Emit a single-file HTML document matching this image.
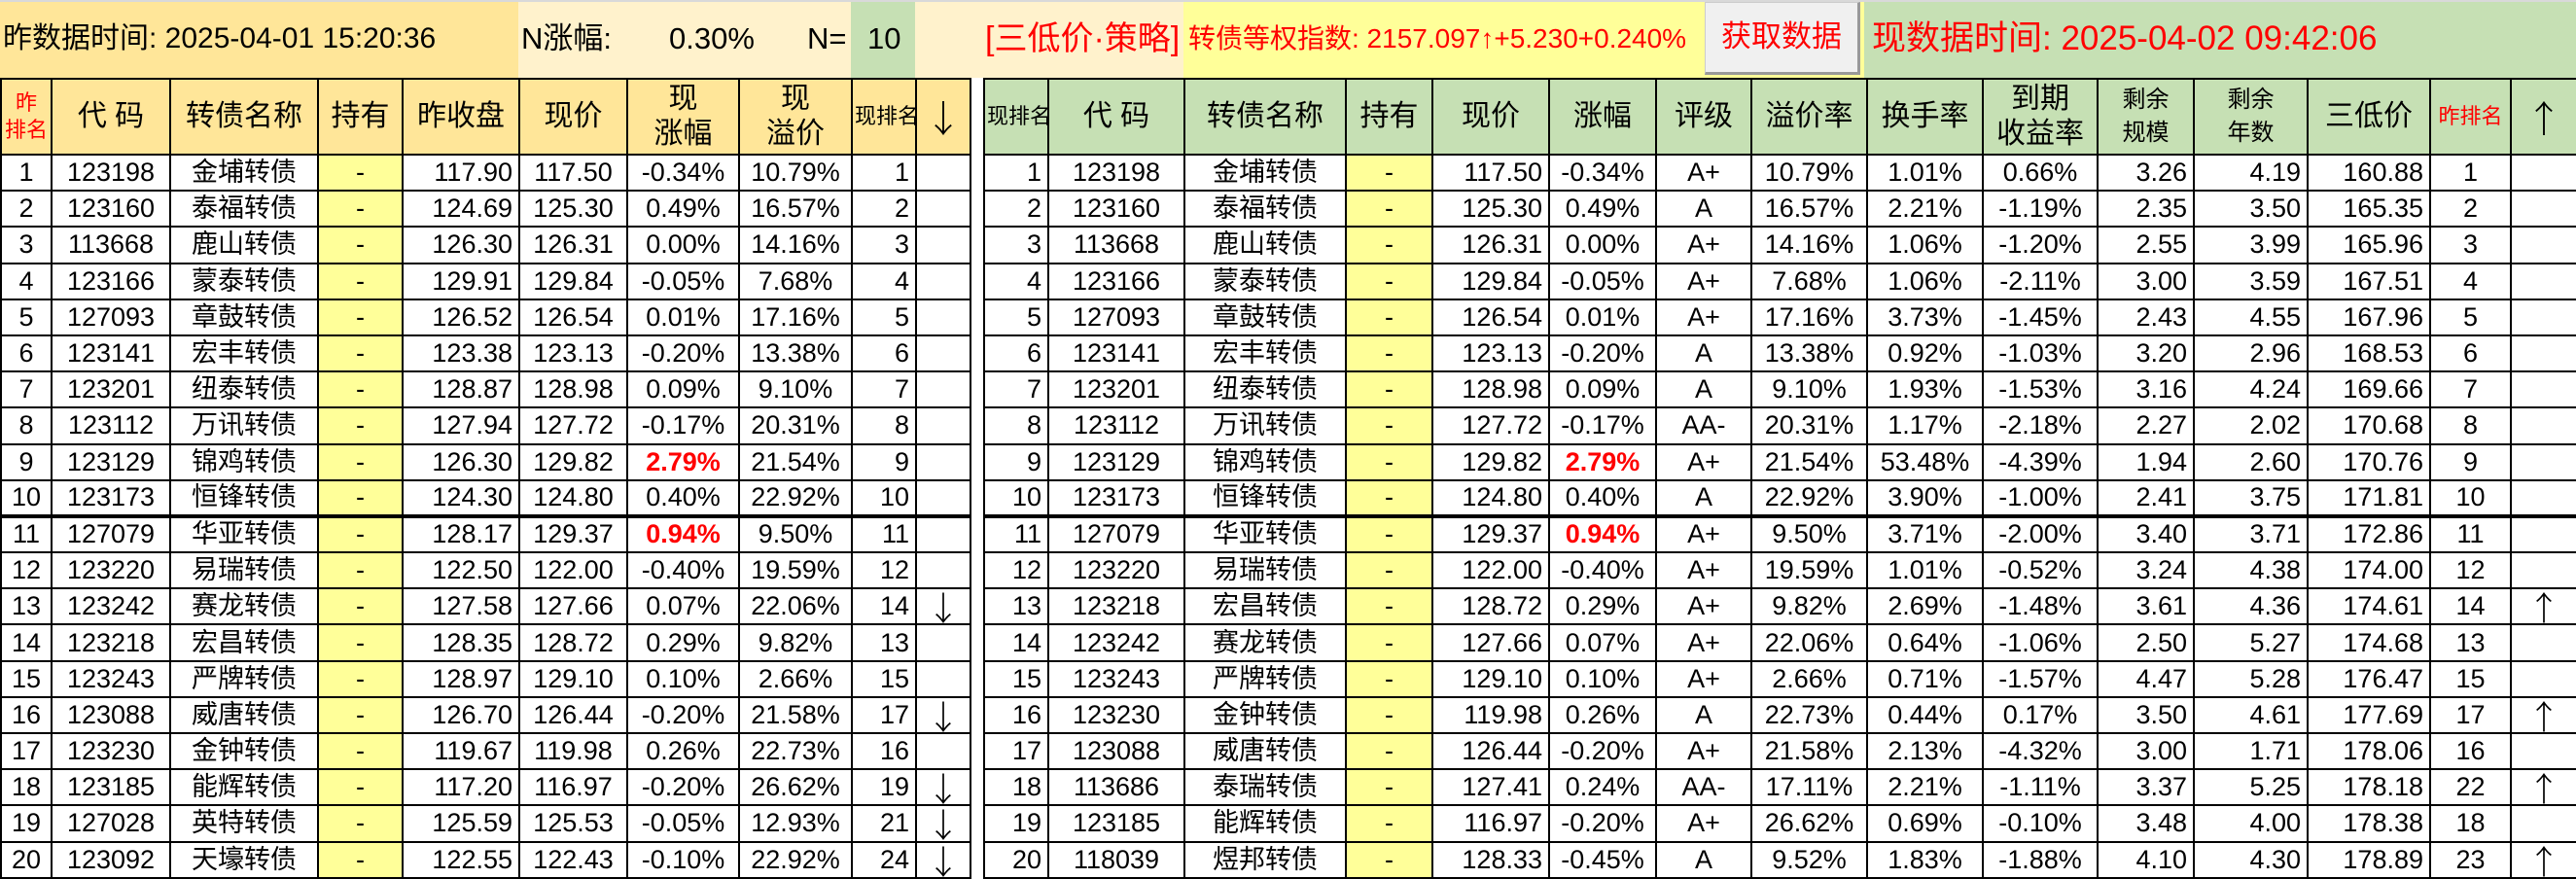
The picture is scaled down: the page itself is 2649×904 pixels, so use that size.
<!DOCTYPE html>
<html><head><meta charset="utf-8"><style>
*{margin:0;padding:0;box-sizing:border-box}
body{width:2649px;height:902px;overflow:hidden;background:#fff;font-family:"Liberation Sans Narrow","Liberation Sans","Noto Sans CJK SC",sans-serif;color:#000;position:relative}
.bar{position:absolute;top:0;height:80px;border-top:2px solid #d9d9d9}
.t{position:absolute;white-space:nowrap;font-size:31px;line-height:80px;top:0}
table{position:absolute;top:80px;border-collapse:collapse;table-layout:fixed;font-size:27px}
td{border:2px solid #000;height:37.2px;padding:0 6px;white-space:nowrap;overflow:hidden;line-height:33px}
tr.h td{height:78px;font-size:30px;text-align:center;line-height:36px;padding:0 2px}
.L tr.h td{background:#FFE699}
.R tr.h td{background:#C6E0B4}
.c{text-align:center}.r{text-align:right}
.y{background:#FFFF99;text-align:center}
.red{color:#f00}.b{color:#f00;font-weight:bold}
.sm{font-size:22px!important;line-height:28px!important}
.ar{text-align:center;font-size:34px;line-height:33px;font-family:"Noto Sans CJK SC","Liberation Sans",sans-serif;font-weight:300}
tr.h td.ar{font-size:38px}
tr.k td{border-bottom:4px solid #000}
</style></head><body>
<div class="bar" style="left:0;width:533px;background:#FFE699"></div>
<div class="bar" style="left:533px;width:342px;background:#FFF2CC"></div>
<div class="bar" style="left:875px;width:66px;background:#C6E0B4"></div>
<div class="bar" style="left:941px;width:276px;background:#FFF2CC"></div>
<div class="bar" style="left:1217px;width:700px;background:#FFFF99"></div>
<div class="bar" style="left:1917px;width:732px;background:#C6E0B4"></div>
<div class="t" style="left:3px;font-size:30px">昨数据时间: 2025-04-01 15:20:36</div>
<div class="t" style="left:536px">N涨幅:</div>
<div class="t" style="left:688px">0.30%</div>
<div class="t" style="left:830px">N=</div>
<div class="t" style="left:892px">10</div>
<div class="t red" style="left:1013px;font-size:34px">[三低价·策略]</div>
<div class="t red" style="left:1222px;font-size:28px">转债等权指数:&nbsp;2157.097↑+5.230+0.240%</div>
<div style="position:absolute;left:1753px;top:2px;width:160px;height:75px;background:#F0F0F0;border:1px solid #ccc;border-right:3px solid #999;border-bottom:3px solid #999;color:#f00;font-size:31px;line-height:70px;text-align:center">获取数据</div>
<div class="t red" style="left:1925px;font-size:35px">现数据时间: 2025-04-02 09:42:06</div>

<table class="L" style="left:0;width:997px">
<colgroup><col style="width:52px"><col style="width:122px"><col style="width:152px"><col style="width:87px"><col style="width:120px"><col style="width:111px"><col style="width:115px"><col style="width:116px"><col style="width:66px"><col style="width:56px"></colgroup>
<tr class="h"><td class="red sm">昨<br>排名</td><td>代 码</td><td>转债名称</td><td>持有</td><td>昨收盘</td><td>现价</td><td>现<br>涨幅</td><td>现<br>溢价</td><td class="sm">现排名</td><td class="ar">↓</td></tr>
<tr><td class="c">1</td><td class="c">123198</td><td class="c">金埔转债</td><td class="y">-</td><td class="r">117.90</td><td class="c">117.50</td><td class="c">-0.34%</td><td class="c">10.79%</td><td class="r">1</td><td></td></tr>
<tr><td class="c">2</td><td class="c">123160</td><td class="c">泰福转债</td><td class="y">-</td><td class="r">124.69</td><td class="c">125.30</td><td class="c">0.49%</td><td class="c">16.57%</td><td class="r">2</td><td></td></tr>
<tr><td class="c">3</td><td class="c">113668</td><td class="c">鹿山转债</td><td class="y">-</td><td class="r">126.30</td><td class="c">126.31</td><td class="c">0.00%</td><td class="c">14.16%</td><td class="r">3</td><td></td></tr>
<tr><td class="c">4</td><td class="c">123166</td><td class="c">蒙泰转债</td><td class="y">-</td><td class="r">129.91</td><td class="c">129.84</td><td class="c">-0.05%</td><td class="c">7.68%</td><td class="r">4</td><td></td></tr>
<tr><td class="c">5</td><td class="c">127093</td><td class="c">章鼓转债</td><td class="y">-</td><td class="r">126.52</td><td class="c">126.54</td><td class="c">0.01%</td><td class="c">17.16%</td><td class="r">5</td><td></td></tr>
<tr><td class="c">6</td><td class="c">123141</td><td class="c">宏丰转债</td><td class="y">-</td><td class="r">123.38</td><td class="c">123.13</td><td class="c">-0.20%</td><td class="c">13.38%</td><td class="r">6</td><td></td></tr>
<tr><td class="c">7</td><td class="c">123201</td><td class="c">纽泰转债</td><td class="y">-</td><td class="r">128.87</td><td class="c">128.98</td><td class="c">0.09%</td><td class="c">9.10%</td><td class="r">7</td><td></td></tr>
<tr><td class="c">8</td><td class="c">123112</td><td class="c">万讯转债</td><td class="y">-</td><td class="r">127.94</td><td class="c">127.72</td><td class="c">-0.17%</td><td class="c">20.31%</td><td class="r">8</td><td></td></tr>
<tr><td class="c">9</td><td class="c">123129</td><td class="c">锦鸡转债</td><td class="y">-</td><td class="r">126.30</td><td class="c">129.82</td><td class="c b">2.79%</td><td class="c">21.54%</td><td class="r">9</td><td></td></tr>
<tr class="k"><td class="c">10</td><td class="c">123173</td><td class="c">恒锋转债</td><td class="y">-</td><td class="r">124.30</td><td class="c">124.80</td><td class="c">0.40%</td><td class="c">22.92%</td><td class="r">10</td><td></td></tr>
<tr><td class="c">11</td><td class="c">127079</td><td class="c">华亚转债</td><td class="y">-</td><td class="r">128.17</td><td class="c">129.37</td><td class="c b">0.94%</td><td class="c">9.50%</td><td class="r">11</td><td></td></tr>
<tr><td class="c">12</td><td class="c">123220</td><td class="c">易瑞转债</td><td class="y">-</td><td class="r">122.50</td><td class="c">122.00</td><td class="c">-0.40%</td><td class="c">19.59%</td><td class="r">12</td><td></td></tr>
<tr><td class="c">13</td><td class="c">123242</td><td class="c">赛龙转债</td><td class="y">-</td><td class="r">127.58</td><td class="c">127.66</td><td class="c">0.07%</td><td class="c">22.06%</td><td class="r">14</td><td class="ar">↓</td></tr>
<tr><td class="c">14</td><td class="c">123218</td><td class="c">宏昌转债</td><td class="y">-</td><td class="r">128.35</td><td class="c">128.72</td><td class="c">0.29%</td><td class="c">9.82%</td><td class="r">13</td><td></td></tr>
<tr><td class="c">15</td><td class="c">123243</td><td class="c">严牌转债</td><td class="y">-</td><td class="r">128.97</td><td class="c">129.10</td><td class="c">0.10%</td><td class="c">2.66%</td><td class="r">15</td><td></td></tr>
<tr><td class="c">16</td><td class="c">123088</td><td class="c">威唐转债</td><td class="y">-</td><td class="r">126.70</td><td class="c">126.44</td><td class="c">-0.20%</td><td class="c">21.58%</td><td class="r">17</td><td class="ar">↓</td></tr>
<tr><td class="c">17</td><td class="c">123230</td><td class="c">金钟转债</td><td class="y">-</td><td class="r">119.67</td><td class="c">119.98</td><td class="c">0.26%</td><td class="c">22.73%</td><td class="r">16</td><td></td></tr>
<tr><td class="c">18</td><td class="c">123185</td><td class="c">能辉转债</td><td class="y">-</td><td class="r">117.20</td><td class="c">116.97</td><td class="c">-0.20%</td><td class="c">26.62%</td><td class="r">19</td><td class="ar">↓</td></tr>
<tr><td class="c">19</td><td class="c">127028</td><td class="c">英特转债</td><td class="y">-</td><td class="r">125.59</td><td class="c">125.53</td><td class="c">-0.05%</td><td class="c">12.93%</td><td class="r">21</td><td class="ar">↓</td></tr>
<tr><td class="c">20</td><td class="c">123092</td><td class="c">天壕转债</td><td class="y">-</td><td class="r">122.55</td><td class="c">122.43</td><td class="c">-0.10%</td><td class="c">22.92%</td><td class="r">24</td><td class="ar">↓</td></tr>
</table>

<table class="R" style="left:1011px;width:1638px">
<colgroup><col style="width:66px"><col style="width:140px"><col style="width:166px"><col style="width:89px"><col style="width:120px"><col style="width:110px"><col style="width:98px"><col style="width:119px"><col style="width:119px"><col style="width:118px"><col style="width:99px"><col style="width:117px"><col style="width:126px"><col style="width:83px"><col style="width:68px"></colgroup>
<tr class="h"><td class="sm">现排名</td><td>代 码</td><td>转债名称</td><td>持有</td><td>现价</td><td>涨幅</td><td>评级</td><td>溢价率</td><td>换手率</td><td>到期<br>收益率</td><td class="sm" style="font-size:24px!important;line-height:34px!important">剩余<br>规模</td><td class="sm" style="font-size:24px!important;line-height:34px!important">剩余<br>年数</td><td>三低价</td><td class="red sm">昨排名</td><td class="ar">↑</td></tr>
<tr><td class="r">1</td><td class="c">123198</td><td class="c">金埔转债</td><td class="y">-</td><td class="r">117.50</td><td class="c">-0.34%</td><td class="c">A+</td><td class="c">10.79%</td><td class="c">1.01%</td><td class="c">0.66%</td><td class="r">3.26</td><td class="r">4.19</td><td class="r">160.88</td><td class="c">1</td><td></td></tr>
<tr><td class="r">2</td><td class="c">123160</td><td class="c">泰福转债</td><td class="y">-</td><td class="r">125.30</td><td class="c">0.49%</td><td class="c">A</td><td class="c">16.57%</td><td class="c">2.21%</td><td class="c">-1.19%</td><td class="r">2.35</td><td class="r">3.50</td><td class="r">165.35</td><td class="c">2</td><td></td></tr>
<tr><td class="r">3</td><td class="c">113668</td><td class="c">鹿山转债</td><td class="y">-</td><td class="r">126.31</td><td class="c">0.00%</td><td class="c">A+</td><td class="c">14.16%</td><td class="c">1.06%</td><td class="c">-1.20%</td><td class="r">2.55</td><td class="r">3.99</td><td class="r">165.96</td><td class="c">3</td><td></td></tr>
<tr><td class="r">4</td><td class="c">123166</td><td class="c">蒙泰转债</td><td class="y">-</td><td class="r">129.84</td><td class="c">-0.05%</td><td class="c">A+</td><td class="c">7.68%</td><td class="c">1.06%</td><td class="c">-2.11%</td><td class="r">3.00</td><td class="r">3.59</td><td class="r">167.51</td><td class="c">4</td><td></td></tr>
<tr><td class="r">5</td><td class="c">127093</td><td class="c">章鼓转债</td><td class="y">-</td><td class="r">126.54</td><td class="c">0.01%</td><td class="c">A+</td><td class="c">17.16%</td><td class="c">3.73%</td><td class="c">-1.45%</td><td class="r">2.43</td><td class="r">4.55</td><td class="r">167.96</td><td class="c">5</td><td></td></tr>
<tr><td class="r">6</td><td class="c">123141</td><td class="c">宏丰转债</td><td class="y">-</td><td class="r">123.13</td><td class="c">-0.20%</td><td class="c">A</td><td class="c">13.38%</td><td class="c">0.92%</td><td class="c">-1.03%</td><td class="r">3.20</td><td class="r">2.96</td><td class="r">168.53</td><td class="c">6</td><td></td></tr>
<tr><td class="r">7</td><td class="c">123201</td><td class="c">纽泰转债</td><td class="y">-</td><td class="r">128.98</td><td class="c">0.09%</td><td class="c">A</td><td class="c">9.10%</td><td class="c">1.93%</td><td class="c">-1.53%</td><td class="r">3.16</td><td class="r">4.24</td><td class="r">169.66</td><td class="c">7</td><td></td></tr>
<tr><td class="r">8</td><td class="c">123112</td><td class="c">万讯转债</td><td class="y">-</td><td class="r">127.72</td><td class="c">-0.17%</td><td class="c">AA-</td><td class="c">20.31%</td><td class="c">1.17%</td><td class="c">-2.18%</td><td class="r">2.27</td><td class="r">2.02</td><td class="r">170.68</td><td class="c">8</td><td></td></tr>
<tr><td class="r">9</td><td class="c">123129</td><td class="c">锦鸡转债</td><td class="y">-</td><td class="r">129.82</td><td class="c b">2.79%</td><td class="c">A+</td><td class="c">21.54%</td><td class="c">53.48%</td><td class="c">-4.39%</td><td class="r">1.94</td><td class="r">2.60</td><td class="r">170.76</td><td class="c">9</td><td></td></tr>
<tr class="k"><td class="r">10</td><td class="c">123173</td><td class="c">恒锋转债</td><td class="y">-</td><td class="r">124.80</td><td class="c">0.40%</td><td class="c">A</td><td class="c">22.92%</td><td class="c">3.90%</td><td class="c">-1.00%</td><td class="r">2.41</td><td class="r">3.75</td><td class="r">171.81</td><td class="c">10</td><td></td></tr>
<tr><td class="r">11</td><td class="c">127079</td><td class="c">华亚转债</td><td class="y">-</td><td class="r">129.37</td><td class="c b">0.94%</td><td class="c">A+</td><td class="c">9.50%</td><td class="c">3.71%</td><td class="c">-2.00%</td><td class="r">3.40</td><td class="r">3.71</td><td class="r">172.86</td><td class="c">11</td><td></td></tr>
<tr><td class="r">12</td><td class="c">123220</td><td class="c">易瑞转债</td><td class="y">-</td><td class="r">122.00</td><td class="c">-0.40%</td><td class="c">A+</td><td class="c">19.59%</td><td class="c">1.01%</td><td class="c">-0.52%</td><td class="r">3.24</td><td class="r">4.38</td><td class="r">174.00</td><td class="c">12</td><td></td></tr>
<tr><td class="r">13</td><td class="c">123218</td><td class="c">宏昌转债</td><td class="y">-</td><td class="r">128.72</td><td class="c">0.29%</td><td class="c">A+</td><td class="c">9.82%</td><td class="c">2.69%</td><td class="c">-1.48%</td><td class="r">3.61</td><td class="r">4.36</td><td class="r">174.61</td><td class="c">14</td><td class="ar">↑</td></tr>
<tr><td class="r">14</td><td class="c">123242</td><td class="c">赛龙转债</td><td class="y">-</td><td class="r">127.66</td><td class="c">0.07%</td><td class="c">A+</td><td class="c">22.06%</td><td class="c">0.64%</td><td class="c">-1.06%</td><td class="r">2.50</td><td class="r">5.27</td><td class="r">174.68</td><td class="c">13</td><td></td></tr>
<tr><td class="r">15</td><td class="c">123243</td><td class="c">严牌转债</td><td class="y">-</td><td class="r">129.10</td><td class="c">0.10%</td><td class="c">A+</td><td class="c">2.66%</td><td class="c">0.71%</td><td class="c">-1.57%</td><td class="r">4.47</td><td class="r">5.28</td><td class="r">176.47</td><td class="c">15</td><td></td></tr>
<tr><td class="r">16</td><td class="c">123230</td><td class="c">金钟转债</td><td class="y">-</td><td class="r">119.98</td><td class="c">0.26%</td><td class="c">A</td><td class="c">22.73%</td><td class="c">0.44%</td><td class="c">0.17%</td><td class="r">3.50</td><td class="r">4.61</td><td class="r">177.69</td><td class="c">17</td><td class="ar">↑</td></tr>
<tr><td class="r">17</td><td class="c">123088</td><td class="c">威唐转债</td><td class="y">-</td><td class="r">126.44</td><td class="c">-0.20%</td><td class="c">A+</td><td class="c">21.58%</td><td class="c">2.13%</td><td class="c">-4.32%</td><td class="r">3.00</td><td class="r">1.71</td><td class="r">178.06</td><td class="c">16</td><td></td></tr>
<tr><td class="r">18</td><td class="c">113686</td><td class="c">泰瑞转债</td><td class="y">-</td><td class="r">127.41</td><td class="c">0.24%</td><td class="c">AA-</td><td class="c">17.11%</td><td class="c">2.21%</td><td class="c">-1.11%</td><td class="r">3.37</td><td class="r">5.25</td><td class="r">178.18</td><td class="c">22</td><td class="ar">↑</td></tr>
<tr><td class="r">19</td><td class="c">123185</td><td class="c">能辉转债</td><td class="y">-</td><td class="r">116.97</td><td class="c">-0.20%</td><td class="c">A+</td><td class="c">26.62%</td><td class="c">0.69%</td><td class="c">-0.10%</td><td class="r">3.48</td><td class="r">4.00</td><td class="r">178.38</td><td class="c">18</td><td></td></tr>
<tr><td class="r">20</td><td class="c">118039</td><td class="c">煜邦转债</td><td class="y">-</td><td class="r">128.33</td><td class="c">-0.45%</td><td class="c">A</td><td class="c">9.52%</td><td class="c">1.83%</td><td class="c">-1.88%</td><td class="r">4.10</td><td class="r">4.30</td><td class="r">178.89</td><td class="c">23</td><td class="ar">↑</td></tr>
</table>
</body></html>
